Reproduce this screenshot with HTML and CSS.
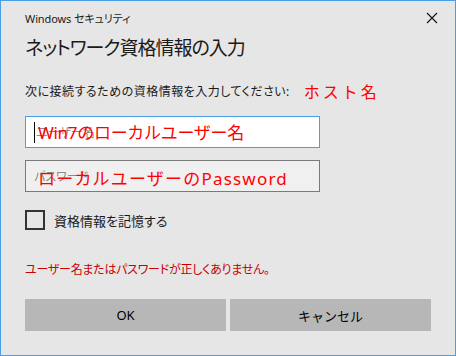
FILE: index.html
```html
<!DOCTYPE html>
<html lang="ja">
<head>
    <meta charset="UTF-8">
    <title>Windows セキュリティ</title>
    <link rel="stylesheet" href="styles.css">
</head>
<body>
    <div class="window">
        <div class="titlebar">
            <span class="title">Windows セキュリティ</span>
            <svg class="close" width="12" height="12" viewBox="0 0 12 12">
                <path d="M1 1 L11 11 M11 1 L1 11" stroke="#111" stroke-width="1.1" fill="none"/>
            </svg>
        </div>

        <h1 class="heading">ネットワーク資格情報の入力</h1>

        <div class="prompt">
            <span>次に接続するための資格情報を入力してください:</span>
            <span class="note host">ホスト名</span>
        </div>

        <div class="field focused">
            <span class="caret"></span>
            <span class="placeholder">ユーザー名</span>
            <span class="note over">Win7のローカルユーザー名</span>
        </div>

        <div class="field">
            <span class="placeholder">パスワード</span>
            <span class="note over low">ローカルユーザーのPassword</span>
        </div>

        <label class="remember">
            <span class="box"></span>
            <span>資格情報を記憶する</span>
        </label>

        <p class="error">ユーザー名またはパスワードが正しくありません。</p>

        <div class="buttons">
            <button class="btn">OK</button>
            <button class="btn">キャンセル</button>
        </div>
    </div>
</body>
</html>
```

FILE: styles.css
```css
body { margin: 0; font-family: "Noto Sans", "Noto Sans CJK JP", sans-serif; font-feature-settings: "palt"; color: #000; }
.window { width: 456px; height: 356px; box-sizing: border-box; border: 1px solid #4a9ee8; background: #e6e6e6; padding: 0 24px; }

.titlebar { display: flex; justify-content: space-between; align-items: center; height: 18px; padding-top: 8px; }
.title { font-size: 11px; letter-spacing: -0.1px; color: #1a1a1a; }
.close { margin-right: -7px; }

.heading { margin: 7px 0 0; font-size: 19px; font-weight: normal; line-height: 28px; letter-spacing: -1px; color: #1a1a1a; }

.prompt { display: flex; align-items: center; height: 20px; margin-top: 19px; font-size: 12px; letter-spacing: 0.5px; color: #1a1a1a; }
.note { color: #ff0000; font-feature-settings: normal; }
.host { margin-left: 14px; font-size: 16px; letter-spacing: 3px; }

.field { position: relative; box-sizing: border-box; width: 295px; height: 32px; margin-top: 15px; border: 1px solid #7a7a7a; background: #f0f0f0; display: flex; align-items: center; padding-left: 8px; }
.field + .field { margin-top: 12px; }
.field.focused { border-color: #4a9ee8; background: #fff; }
.caret { width: 1px; height: 21px; background: #000; margin-right: 1px; }
.placeholder { font-size: 12px; color: #8a8a8a; }
.over { position: absolute; left: 12px; top: 6px; font-size: 17px; line-height: 20px; letter-spacing: -0.3px; }
.over.low { top: 8px; letter-spacing: 1.2px; }

.remember { display: flex; align-items: center; gap: 9px; margin-top: 18px; height: 20px; font-size: 13px; color: #1a1a1a; }
.box { width: 16px; height: 16px; border: 2px solid #333; }

.error { margin: 30px 0 0; font-size: 12px; line-height: 20px; letter-spacing: -0.25px; color: #c80000; }

.buttons { display: flex; gap: 4px; margin-top: 19px; }
.btn { flex: 1; height: 32px; border: none; background: #b7b7b7; font-family: inherit; font-size: 13px; color: #000; padding: 0; }
```
